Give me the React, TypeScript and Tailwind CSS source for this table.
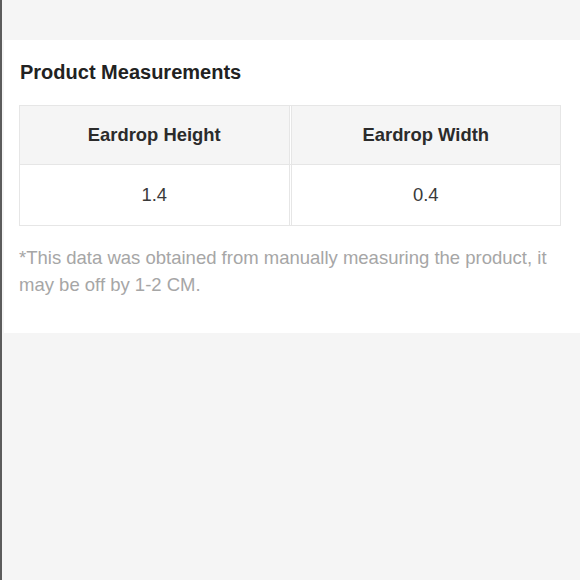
import React from 'react';

const measurements = [
  { label: 'Eardrop Height', value: '1.4' },
  { label: 'Eardrop Width', value: '0.4' },
];

const App: React.FC = () => {
  return (
    <div
      className="min-h-[580px] w-[580px] bg-[#f5f5f5] border-l-2 border-[#5c5c5c]"
      style={{ fontFamily: '"Liberation Sans", Arial, sans-serif' }}
    >
      <div className="pt-[40px]">
        <div className="bg-white ml-[2px] pl-[15px] pr-[19px] pt-[18px] pb-[35px]">
          <h2 className="pl-px text-[20px] leading-[28px] font-bold text-[#222]">Product Measurements</h2>

          {/* Measurements table */}
          <div className="mt-[19px] border border-[#e6e6e6]">
            <div className="flex gap-px bg-white border-b border-[#e6e6e6]">
              {measurements.map((m, i) => (
                <div
                  key={m.label}
                  className={`flex-1 h-[58px] flex items-center justify-center bg-[#f5f5f5] text-[18.4px] font-bold text-[#2b2b2b] ${
                    i === 0 ? 'border-r border-[#e6e6e6]' : 'border-l border-[#e6e6e6]'
                  }`}
                >
                  {m.label}
                </div>
              ))}
            </div>
            <div className="flex gap-px bg-white">
              {measurements.map((m, i) => (
                <div
                  key={m.label}
                  className={`flex-1 h-[60px] flex items-center justify-center text-[18.4px] text-[#3a3a3a] ${
                    i === 0 ? 'border-r border-[#e6e6e6]' : 'border-l border-[#e6e6e6]'
                  }`}
                >
                  {m.value}
                </div>
              ))}
            </div>
          </div>

          <p className="mt-[18px] text-[18.5px] leading-[27px] text-[#a6a6a6]">
            *This data was obtained from manually measuring the product, it may be off by 1-2 CM.
          </p>
        </div>
      </div>
    </div>
  );
};

export default App;
